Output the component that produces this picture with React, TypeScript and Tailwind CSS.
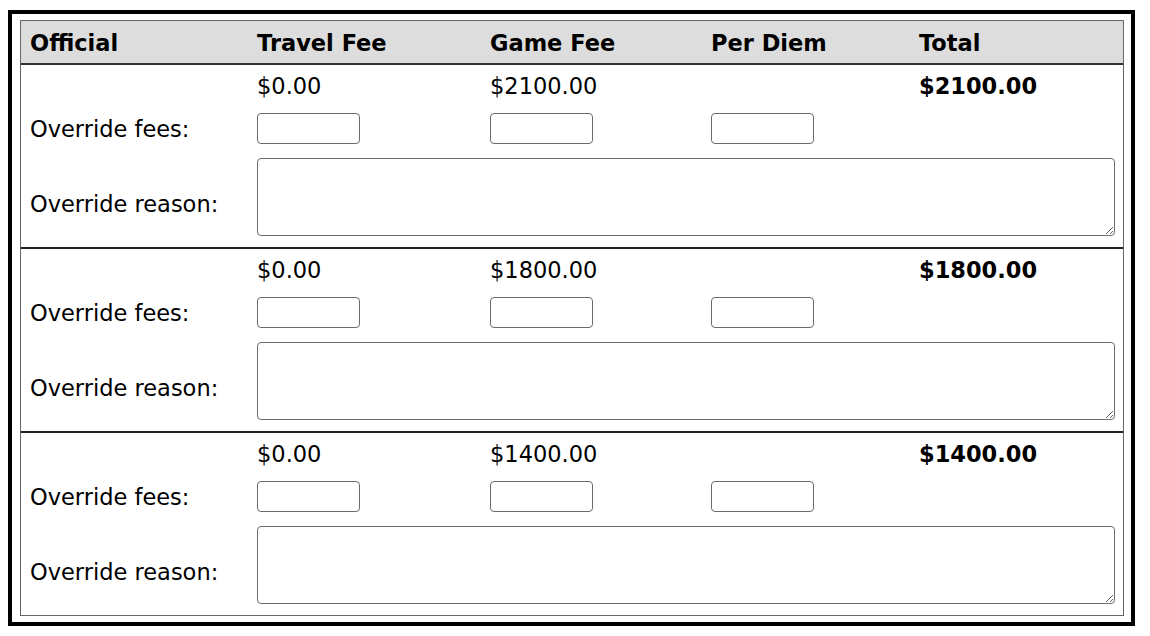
const officials = [
  { travel: "$0.00", game: "$2100.00", total: "$2100.00" },
  { travel: "$0.00", game: "$1800.00", total: "$1800.00" },
  { travel: "$0.00", game: "$1400.00", total: "$1400.00" },
];

const cols = "grid grid-cols-[227px_233px_221px_208px_1fr]";
const inputCls = "h-[31px] w-[103px] rounded-[4px] border border-[#6b6b6b] bg-white";

function OfficialRow({ travel, game, total, last }: { travel: string; game: string; total: string; last: boolean }) {
  return (
    <div className={`${cols} grid-rows-[40px_47px_95px] ${last ? "" : "border-b-2 border-[#222]"}`}>
      <div />
      <div className="flex items-center pl-[9px] pt-[2px]">{travel}</div>
      <div className="flex items-center pl-[9px] pt-[2px]">{game}</div>
      <div />
      <div className="flex items-center pl-[9px] pt-[2px] font-bold">{total}</div>

      <div className="flex items-center pl-[9px]">Override fees:</div>
      <div className="flex items-center pl-[9px]">
        <input type="text" className={inputCls} />
      </div>
      <div className="flex items-center pl-[9px]">
        <input type="text" className={inputCls} />
      </div>
      <div className="flex items-center pl-[9px]">
        <input type="text" className={inputCls} />
      </div>
      <div />

      <div className="pl-[9px] pt-[39px]">Override reason:</div>
      <div className="col-span-4 pl-[9px] pr-[8px] pt-[6px]">
        <textarea className="block h-[78px] w-full rounded-[4px] border border-[#6b6b6b] bg-white" />
      </div>
    </div>
  );
}

export default function App() {
  return (
    <div className="bg-white pb-[10px] pt-[10px] pl-[8px]">
      <div className="w-[1127px] border-4 border-black pb-[6px] pl-[8px] pr-[7px] pt-[6px] font-['DejaVu_Sans',Verdana,sans-serif] text-[22.5px] leading-[26px] text-black">
        <div className="border border-[#666]">
          <div className={`${cols} h-[44px] border-b-2 border-[#333] bg-[#dddddd] font-bold`}>
            <div className="flex items-center pl-[9px] pt-[2px]">Official</div>
            <div className="flex items-center pl-[9px] pt-[2px]">Travel Fee</div>
            <div className="flex items-center pl-[9px] pt-[2px]">Game Fee</div>
            <div className="flex items-center pl-[9px] pt-[2px]">Per Diem</div>
            <div className="flex items-center pl-[9px] pt-[2px]">Total</div>
          </div>
          {officials.map((o, i) => (
            <OfficialRow key={i} {...o} last={i === officials.length - 1} />
          ))}
        </div>
      </div>
    </div>
  );
}
